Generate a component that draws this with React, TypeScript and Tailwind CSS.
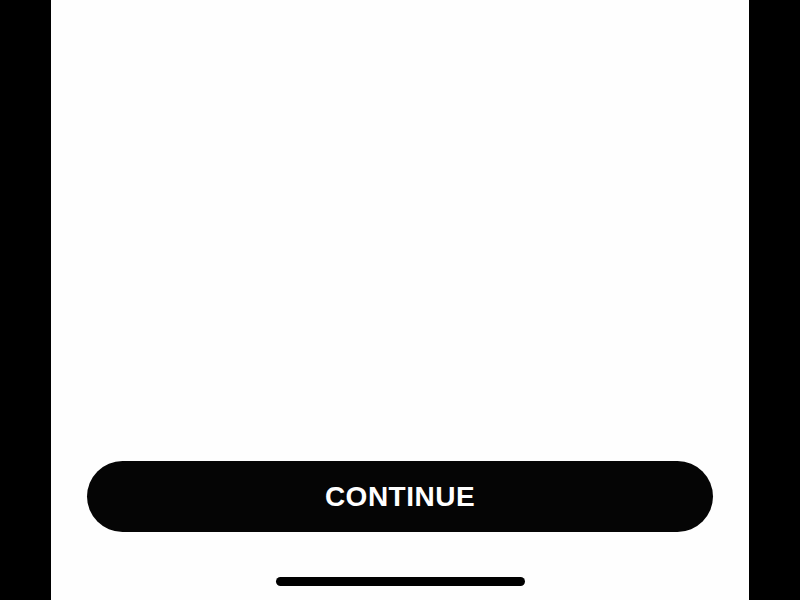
export default function App() {
  return (
    <div className="h-[600px] w-full bg-black flex justify-center">
      <div className="w-[698px] h-full bg-[#fefefe] flex flex-col justify-end pb-[14px]">
        <button
          className="mx-[36px] h-[71px] rounded-full bg-[#050505] text-white text-[28px] font-bold tracking-[0.5px] flex items-center justify-center"
          style={{ fontFamily: '"Liberation Sans", Arial, sans-serif' }}
        >
          CONTINUE
        </button>
        <div className="mt-[45px] self-center w-[249px] h-[9px] rounded-full bg-black" />
      </div>
    </div>
  );
}
